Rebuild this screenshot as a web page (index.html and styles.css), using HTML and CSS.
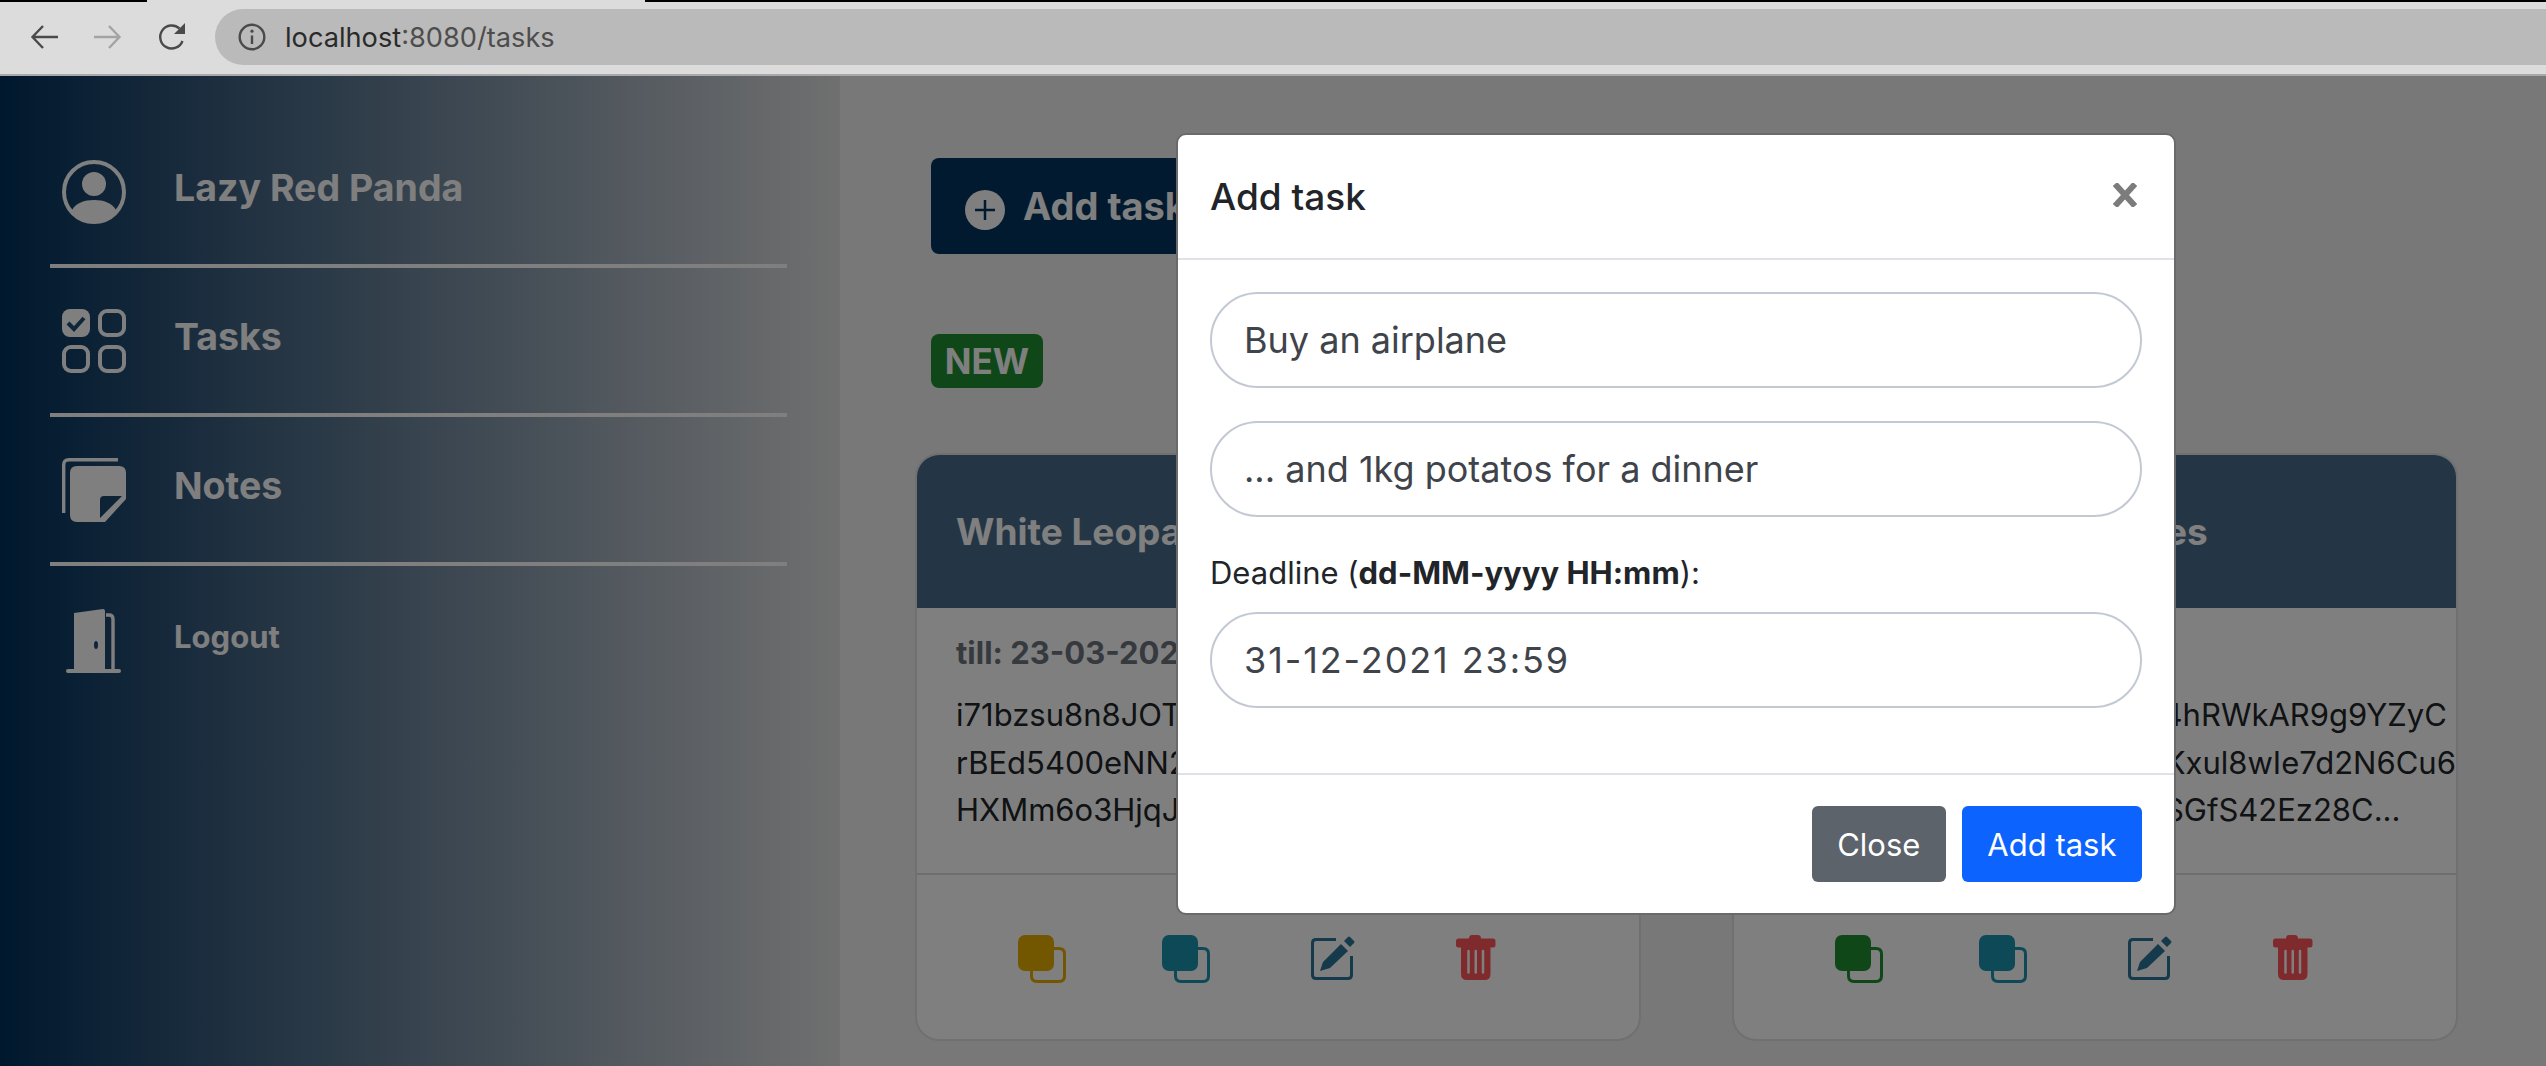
FILE: index.html
```html
<!DOCTYPE html>
<html lang="en">

<head>
    <meta charset="UTF-8">
    <title>Tasks</title>
    <link rel="stylesheet" href="styles.css">
</head>

<body>
    <div class="topline">
        <div class="topline-black"></div>
        <div class="topline-gap"></div>
        <div class="topline-black topline-rest"></div>
    </div>
    <div class="browser">
        <svg class="nav-icon" viewBox="0 0 28 28" fill="none" stroke="#4a4a4a" stroke-width="2.4">
            <path d="M28 14H3M13 3L2.500 14L13 25" />
        </svg>
        <svg class="nav-icon nav-next" viewBox="0 0 28 28" fill="none" stroke="#a3a3a3" stroke-width="2.4">
            <path d="M0 14H25M15 3L25.500 14L15 25" />
        </svg>
        <svg class="nav-icon nav-reload" viewBox="0 0 28 28" fill="none" stroke="#4a4a4a" stroke-width="2.4">
            <path d="M24.500 18A11.500 11.500 0 1 1 21.500 5.500" />
            <path d="M27 0V11H16Z" fill="#4a4a4a" stroke="none" />
        </svg>
        <div class="urlbar">
            <svg class="url-info" viewBox="0 0 28 28" fill="none" stroke="#4a4a4a" stroke-width="2.4">
                <circle cx="14" cy="14" r="12.3" />
                <path d="M14 12.500V21" />
                <circle cx="14" cy="8.2" r="1.6" fill="#4a4a4a" stroke="none" />
            </svg>
            <span class="url-host">localhost</span><span class="url-path">:8080/tasks</span>
        </div>
    </div>

    <div class="app">
        <aside class="sidebar">
            <div class="side-row">
                <svg class="side-icon" viewBox="0 0 64 64">
                    <circle cx="32" cy="32" r="30" fill="none" stroke="#fff" stroke-width="4" />
                    <circle cx="32" cy="24" r="12" fill="#fff" />
                    <path d="M10 50C14 43 22 40 32 40S50 43 54 50C49 57 41 61 32 61S15 57 10 50Z" fill="#fff" />
                </svg>
                <span class="side-label">Lazy Red Panda</span>
            </div>
            <div class="side-row">
                <svg class="side-icon" viewBox="0 0 64 64">
                    <rect x="0" y="0" width="28" height="28" rx="8" fill="#fff" />
                    <path d="M6 14L12 20L22 9" fill="none" stroke="#1f4a74" stroke-width="4" />
                    <rect x="38" y="2" width="24" height="24" rx="7" fill="none" stroke="#fff" stroke-width="4" />
                    <rect x="2" y="38" width="24" height="24" rx="7" fill="none" stroke="#fff" stroke-width="4" />
                    <rect x="38" y="38" width="24" height="24" rx="7" fill="none" stroke="#fff" stroke-width="4" />
                </svg>
                <span class="side-label">Tasks</span>
            </div>
            <div class="side-row">
                <svg class="side-icon" viewBox="0 0 64 64">
                    <path d="M56 1.700H7Q1.700 1.700 1.700 7V55" fill="none" stroke="#fff" stroke-width="3.400" />
                    <path fill-rule="evenodd" fill="#fff" d="M15 8H57Q64 8 64 15V41L43 64H15Q8 64 8 57V15Q8 8 15 8ZM42 38Q38 38 38 42V60L60 38Z" />
                </svg>
                <span class="side-label">Notes</span>
            </div>
            <div class="side-row side-row-last">
                <svg class="side-icon" viewBox="0 0 64 64">
                    <path d="M12 4L41 0Q43 0 43 2V60H12Z" fill="#fff" />
                    <path d="M44 6H47Q51 6 51 10V60" fill="none" stroke="#fff" stroke-width="3.400" />
                    <rect x="4" y="60" width="55" height="4" rx="2" fill="#fff" />
                    <ellipse cx="34" cy="36" rx="2" ry="4" fill="#1f4a74" />
                </svg>
                <span class="side-label side-label-small">Logout</span>
            </div>
        </aside>

        <main class="content">
            <button class="add-btn">
                <svg class="add-icon" viewBox="0 0 40 40">
                    <circle cx="20" cy="20" r="20" fill="#fff" />
                    <path d="M20 10V30M10 20H30" stroke="#03345f" stroke-width="2.500" />
                </svg>
                Add task
            </button>
            <div class="badge">NEW</div>
            <div class="cards">
                <section class="card">
                    <header class="card-head">White Leopard</header>
                    <div class="card-body">
                        <div class="till">till: 23-03-2021</div>
                        <p class="card-text">i71bzsu8n8JOTxd0RWkA7cP3uYh<br>rBEd5400eNN2mVq8Lx3sKt0Yw<br>HXMm6o3HjqJ5fGt2Nn7RbVc</p>
                    </div>
                    <footer class="card-foot">
                        <svg class="act-copy act-yellow"><use href="#copy" /></svg>
                        <svg class="act-copy act-teal"><use href="#copy" /></svg>
                        <svg class="act-edit"><use href="#edit" /></svg>
                        <svg class="act-trash"><use href="#trash" /></svg>
                    </footer>
                </section>
                <section class="card">
                    <header class="card-head">Clever Hippopotamuses</header>
                    <div class="card-body">
                        <div class="till">till: 14-05-2021</div>
                        <p class="card-text">Qw2ZWT9bLm3KcVn7PdT4hRWkAR9g9YZyC<br>Ht5Jf0sUoE1yGi4BaPq8VcKxul8wIe7d2N6Cu6<br>aD3rXk8MpQvT1lKw7Ye2nSGfS42Ez28C...</p>
                    </div>
                    <footer class="card-foot">
                        <svg class="act-copy act-green"><use href="#copy" /></svg>
                        <svg class="act-copy act-teal"><use href="#copy" /></svg>
                        <svg class="act-edit"><use href="#edit" /></svg>
                        <svg class="act-trash"><use href="#trash" /></svg>
                    </footer>
                </section>
            </div>
        </main>
    </div>

    <div class="backdrop"></div>

    <div class="modal">
        <div class="modal-head">
            <span class="modal-title">Add task</span>
            <svg class="modal-close" viewBox="0 0 26 24" fill="none" stroke="#7c7c7c" stroke-width="6">
                <path d="M3 1L23 23M23 1L3 23" />
            </svg>
        </div>
        <div class="modal-body">
            <input class="pill" type="text" value="Buy an airplane">
            <input class="pill" type="text" value="... and 1kg potatos for a dinner">
            <label class="deadline">Deadline (<b>dd-MM-yyyy HH:mm</b>):</label>
            <input class="pill pill-date" type="text" value="31-12-2021 23:59">
        </div>
        <div class="modal-foot">
            <button class="btn btn-grey">Close</button>
            <button class="btn btn-blue">Add task</button>
        </div>
    </div>

    <svg class="defs" width="0" height="0">
        <symbol id="copy" viewBox="0 0 48 48">
            <rect x="0" y="0" width="36" height="36" rx="7" fill="currentColor" />
            <path d="M36 13.500H41Q46.500 13.500 46.500 19V41Q46.500 46.500 41 46.500H19Q13.500 46.500 13.500 41V36" fill="none" stroke="currentColor" stroke-width="3" />
        </symbol>
        <symbol id="edit" viewBox="0 0 44 44">
            <path d="M25 3.500H5Q1.500 3.500 1.500 7V39Q1.500 42.500 5 42.500H37Q40.500 42.500 40.500 39V20" fill="none" stroke="currentColor" stroke-width="3" />
            <path d="M9 35L12 26L30 8L37 15L19 32Z" fill="currentColor" />
            <path d="M33 5L37 1Q38 0 39 1L43 5Q44 6 43 7L39 11Z" fill="currentColor" />
        </symbol>
        <symbol id="trash" viewBox="0 0 40 45">
            <path d="M13 3.500Q13 0 16 0H22Q25 0 25 3.500H37Q39.500 3.500 39.500 6V10Q39.500 12.500 37 12.500H2.500Q0 12.500 0 10V6Q0 3.500 2.500 3.500Z" fill="currentColor" />
            <path d="M5 12H34.500V39Q34.500 45 28.500 45H11Q5 45 5 39Z" fill="currentColor" />
            <path d="M12.500 16V37.500M19.750 16V37.500M27 16V37.500" stroke="#fff" stroke-width="2.500" stroke-linecap="round" />
        </symbol>
    </svg>
</body>

</html>
```
FILE: styles.css
```css
* {
    margin: 0;
    padding: 0;
    box-sizing: border-box;
}

html,
body {
    width: 100%;
    height: 100%;
    overflow: hidden;
}

body {
    position: relative;
    font-family: Inter, "Liberation Sans", sans-serif;
    background: #f0f0f0;
}

.topline {
    height: 2px;
    display: flex;
    background: #dcdcdc;
}

.topline-black {
    width: 147px;
    background: #000;
}

.topline-gap {
    width: 498px;
}

.topline-rest {
    flex: 1;
}

.browser {
    height: 74px;
    background: #dcdcdc;
    display: flex;
    align-items: center;
    padding: 0 0 2px 30px;
    border-bottom: 2px solid #a9a9a9;
}

.nav-icon {
    width: 28px;
    height: 28px;
    flex-shrink: 0;
}

.nav-next,
.nav-reload {
    margin-left: 36px;
}

.urlbar {
    flex: 1;
    height: 56px;
    margin-left: 29px;
    background: #bababa;
    border-radius: 28px 0 0 28px;
    display: flex;
    align-items: center;
    padding-left: 23px;
    font-size: 27.2px;
    color: #2a2a2a;
}

.url-info {
    width: 28px;
    height: 28px;
    margin-right: 19px;
}

.url-path {
    color: #4d4d4d;
}

.app {
    height: 990px;
    display: flex;
}

.sidebar {
    width: 840px;
    padding: 43px 53px 0 50px;
    background: linear-gradient(to right, #00305c, #e0e0e0);
}

.side-row {
    height: 149px;
    display: flex;
    align-items: center;
    gap: 48px;
    padding-left: 12px;
    border-bottom: 4px solid #fff;
}

.side-row-last {
    border-bottom: 0;
}

.side-icon {
    width: 64px;
    height: 64px;
}

.side-label {
    margin-bottom: 9px;
    font-size: 37.5px;
    font-weight: 700;
    color: #fff;
}

.side-label-small {
    font-size: 31px;
}

.content {
    flex: 1;
    padding: 82px 50px 0 91px;
}

.add-btn {
    width: 320px;
    height: 96px;
    border: 0;
    border-radius: 8px;
    background: #03345f;
    color: #fff;
    font-family: inherit;
    font-size: 38px;
    font-weight: 700;
    display: flex;
    align-items: center;
    gap: 18px;
    padding-left: 34px;
}

.add-icon {
    width: 40px;
    height: 40px;
    margin-top: 8px;
}

.badge {
    width: 112px;
    height: 54px;
    margin-top: 80px;
    display: flex;
    align-items: center;
    justify-content: center;
    border-radius: 8px;
    background: #1f8f30;
    color: #fff;
    font-size: 35px;
    font-weight: 700;
}

.cards {
    display: grid;
    grid-template-columns: 726px 726px;
    gap: 91px;
    margin-top: 65px;
    margin-left: -16px;
}

.card {
    height: 588px;
    background: #fff;
    border: 2px solid #e0e0e0;
    border-radius: 24px;
    overflow: hidden;
}

.card-head {
    height: 153px;
    display: flex;
    align-items: center;
    padding-left: 39px;
    background: #486c8a;
    color: #fff;
    font-size: 37px;
    font-weight: 700;
}

.card-body {
    height: 267px;
    padding: 23px 39px 0;
    border-bottom: 2px solid #dcdcdc;
}

.till {
    font-size: 31px;
    line-height: 44px;
    font-weight: 700;
    color: #6c757d;
}

.card-text {
    margin-top: 16px;
    font-size: 31px;
    line-height: 47.5px;
    white-space: nowrap;
    color: #212529;
}

.card-foot {
    display: flex;
    align-items: flex-start;
    padding: 60px 0 0 101px;
}

.card-foot svg {
    flex-shrink: 0;
}

.act-copy {
    width: 48px;
    height: 48px;
    margin-right: 96px;
}

.act-yellow {
    color: #e6ac00;
}

.act-green {
    color: #1f8f30;
}

.act-teal {
    color: #1c92ae;
}

.act-edit {
    width: 44px;
    height: 44px;
    margin: 1px 101px 0 5px;
    color: #287498;
}

.act-trash {
    width: 40px;
    height: 45px;
    color: #ff565a;
}

.backdrop {
    position: absolute;
    left: 0;
    top: 76px;
    right: 0;
    bottom: 0;
    background: rgba(0, 0, 0, 0.5);
}

.modal {
    position: absolute;
    left: 1176px;
    top: 133px;
    width: 1000px;
    height: 782px;
    background: #fff;
    border: 2px solid #6a6a6a;
    border-radius: 10px;
    overflow: hidden;
}

.modal-head {
    height: 125px;
    display: flex;
    align-items: center;
    justify-content: space-between;
    padding: 0 36px 0 32px;
    border-bottom: 2px solid #dee2e6;
}

.modal-title {
    font-size: 37px;
    font-weight: 500;
    color: #212529;
}

.modal-close {
    width: 26px;
    height: 24px;
    margin-bottom: 4px;
}

.modal-body {
    height: 515px;
    padding: 32px 32px 0;
    border-bottom: 2px solid #dee2e6;
}

.pill {
    display: block;
    width: 100%;
    height: 96px;
    margin-bottom: 33px;
    padding: 0 32px;
    border: 2px solid #c3c9d3;
    border-radius: 48px;
    font-family: inherit;
    font-size: 36px;
    color: #3f444b;
    background: #fff;
}

.pill-date {
    letter-spacing: 1.900px;
}

.deadline {
    display: block;
    font-size: 31px;
    line-height: 46px;
    color: #212529;
    margin-bottom: 16px;
}

.modal-foot {
    display: flex;
    justify-content: flex-end;
    gap: 16px;
    padding: 31px 32px 0;
}

.btn {
    height: 76px;
    border: 0;
    border-radius: 6px;
    font-family: inherit;
    font-size: 31px;
    color: #fff;
    padding: 0 25.500px;
}

.btn-grey {
    background: #5c636a;
}

.btn-blue {
    background: #0d63fd;
}

.defs {
    position: absolute;
}
```
